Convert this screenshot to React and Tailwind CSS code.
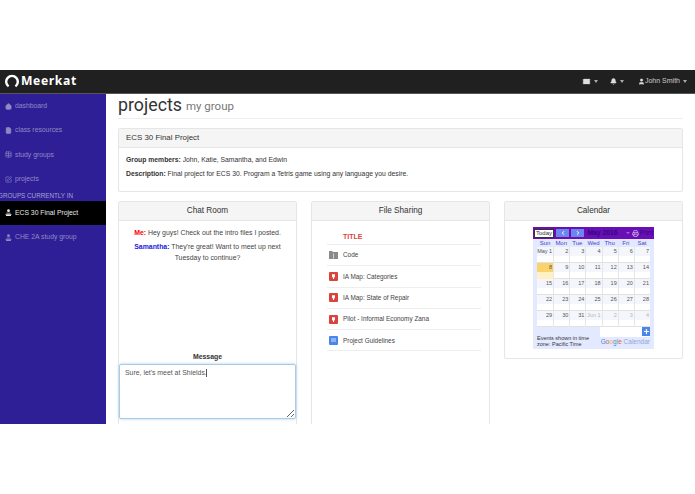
import { Mail, Bell, User, ChevronLeft, ChevronRight, Home, FileText, Table, SquarePen, Plus, Printer } from 'lucide-react';

const weeks = [
  ['May 1', '2', '3', '4', '5', '6', '7'],
  ['8', '9', '10', '11', '12', '13', '14'],
  ['15', '16', '17', '18', '19', '20', '21'],
  ['22', '23', '24', '25', '26', '27', '28'],
  ['29', '30', '31', 'Jun 1', '2', '3', '4'],
];
const days = ['Sun', 'Mon', 'Tue', 'Wed', 'Thu', 'Fri', 'Sat'];

function Caret() {
  return <span className="w-0 h-0 border-x-[2.5px] border-x-transparent border-t-[3px] border-t-[#aaa] ml-[3px]" />;
}

// little "people" icon used for the group rows
function GroupIcon({ color }) {
  return (
    <svg width="7" height="7" viewBox="0 0 10 10" fill={color} className="shrink-0">
      <circle cx="5" cy="2.4" r="2" />
      <path d="M2 5.2h6v1.3H2zM0.5 7h9v1H0.5zM1.5 8.3h7V10h-7z" />
    </svg>
  );
}

function SideItem({ icon, label, active }) {
  return (
    <div className={`h-[24.4px] flex items-center gap-[3px] pl-[5px] text-[6.8px] ${active ? 'bg-black text-[#e8e8e8]' : 'text-[#8f8ac4]'}`}>
      {icon}
      <span>{label}</span>
    </div>
  );
}

function Panel({ title, children, className }) {
  return (
    <div className={`border border-[#e6e6e6] rounded-[2px] bg-white ${className}`}>
      <div className="h-[19px] bg-[#f5f5f5] border-b border-[#e6e6e6] flex items-center justify-center text-[8.2px] text-[#333]">
        {title}
      </div>
      {children}
    </div>
  );
}

function FileIcon({ kind }) {
  if (kind === 'folder') {
    return (
      <svg width="9" height="8" viewBox="0 0 9 8" className="shrink-0">
        <path d="M0 0h3.5v1H9v7H0z" fill="#8a8a8a" />
        <path d="M4 2.5h1v5H4z" fill="#d5d5d5" />
      </svg>
    );
  }
  if (kind === 'map') {
    return (
      <svg width="9" height="9" viewBox="0 0 9 9" className="shrink-0">
        <rect width="9" height="9" rx="1" fill="#d9443f" />
        <path d="M3 2.2h3v2.4L5 6v1H4V6L3 4.6z" fill="#fff" />
      </svg>
    );
  }
  return (
    <svg width="9" height="9" viewBox="0 0 9 9" className="shrink-0">
      <rect width="9" height="9" rx="1" fill="#4a86e8" />
      <path d="M2 2.5h5v1H2zM2 4.5h5v1H2z" fill="#cfe0fb" />
    </svg>
  );
}

function FileRow({ kind, name }) {
  return (
    <div className="h-[21.3px] border-b border-[#eee] flex items-center pl-[2px]">
      <div className="w-[14px] flex">
        <FileIcon kind={kind} />
      </div>
      <span className="text-[6.4px] text-[#444]">{name}</span>
    </div>
  );
}

function Calendar() {
  return (
    <div className="w-[121px] mx-auto bg-[#e3e9ff] text-[#555]">
      <div className="h-[12px] bg-[#6a0fb5] flex items-center px-[1px] gap-[2px]">
        <span className="bg-white border border-[#333] text-[6px] leading-[7px] px-[1px] text-[#333]">Today</span>
        <span className="w-[14px] h-[8px] bg-[#6d86ee] flex items-center justify-center">
          <ChevronLeft size={6} color="white" strokeWidth={4} />
        </span>
        <span className="w-[14px] h-[8px] bg-[#6d86ee] flex items-center justify-center">
          <ChevronRight size={6} color="white" strokeWidth={4} />
        </span>
        <span className="ml-[1px] text-[6.8px] font-bold text-[#2c0a80] whitespace-nowrap">May 2016</span>
        <span className="ml-[6px] w-0 h-0 border-x-[2px] border-x-transparent border-t-[2px] border-t-[#9a6ad8]" />
        <span className="ml-auto flex items-center gap-[1px] text-[6.5px] text-[#2c0a80]">
          <Printer size={7} color="#e8e0ff" />
          Print
        </span>
      </div>
      <div className="px-[4px]">
        <div className="grid grid-cols-7 h-[8px] items-center text-center text-[6px] text-[#4a3fc9]">
          {days.map((d) => (
            <span key={d}>{d}</span>
          ))}
        </div>
        <div className="bg-white">
          {weeks.map((w, i) => (
            <div key={i} className="grid grid-cols-7 h-[16px] border-b border-[#e2e2e2]">
              {w.map((d, j) => {
                const other = i === 4 && j > 2;
                const today = d === '8';
                return (
                  <div key={d} className="border-l border-[#e6e6e6] first:border-l-0">
                    <div className={`h-[8.5px] flex items-center justify-end pr-[1px] text-[5.5px] ${today ? 'bg-[#fbd36c]' : 'bg-[#f4f6fb]'} ${other ? 'text-[#b5b5b5]' : ''}`}>
                      {d}
                    </div>
                    <div className={`h-[7px] ${today ? 'bg-[#fff1c4]' : ''}`} />
                  </div>
                );
              })}
            </div>
          ))}
        </div>
        <div className="h-[22px] flex justify-between items-end pb-[2px]">
          <span className="text-[5.5px] leading-[6px] text-[#333] w-[60px]">Events shown in time zone: Pacific Time</span>
          <div className="relative w-[50px] h-[20px] flex flex-col items-end">
            <div className="w-full h-[10px] bg-white" />
            <span className="text-[6.5px] text-[#8fa6d8] leading-[9px] whitespace-nowrap">
              <span className="text-[#4a86e8]">G</span>
              <span className="text-[#e0594f]">o</span>
              <span className="text-[#e8b93f]">o</span>
              <span className="text-[#4a86e8]">g</span>
              <span className="text-[#5aa85a]">l</span>
              <span className="text-[#e0594f]">e</span> Calendar
            </span>
            <span className="absolute top-0 right-0 w-[8px] h-[9px] bg-[#4a86e8] flex items-center justify-center">
              <Plus size={7} color="white" strokeWidth={4} />
            </span>
          </div>
        </div>
      </div>
    </div>
  );
}

export default function App() {
  return (
    <div className="w-[695px] h-[494px] bg-white pt-[70px] overflow-hidden font-['Liberation_Sans',Arial,sans-serif]">
      <div className="h-[354px] overflow-hidden flex flex-col">
        <nav className="h-[24px] shrink-0 bg-[#202020] border-b border-[#555] flex items-center justify-between pl-[5px] pr-[8px]">
          <div className="flex items-center gap-[2px] text-white">
            <svg width="14" height="14" viewBox="0 0 14 14" fill="none" stroke="white" strokeWidth="2.4">
              <path d="M3.6 12.4A5.8 5.8 0 1 1 10.4 12.4" />
            </svg>
            <span className="font-['Open_Sans',sans-serif] font-bold text-[12.2px] tracking-[0.6px]">Meerkat</span>
          </div>
          <div className="flex items-center text-[#ccc] text-[7px]">
            <Mail size={9} fill="#ddd" color="#202020" />
            <Caret />
            <Bell size={7} fill="#ddd" color="#ddd" className="ml-[12px]" />
            <Caret />
            <User size={7} fill="#ddd" color="#ddd" className="ml-[14px]" />
            <span>John Smith</span>
            <Caret />
          </div>
        </nav>
        <div className="flex flex-1 min-h-0">
          <aside className="w-[106px] shrink-0 bg-[#2e1f96] overflow-hidden">
            <SideItem icon={<Home size={7} fill="#8f8ac4" color="#8f8ac4" />} label="dashboard" />
            <SideItem icon={<FileText size={7} fill="#8f8ac4" color="#8f8ac4" />} label="class resources" />
            <SideItem icon={<Table size={7} color="#8f8ac4" />} label="study groups" />
            <SideItem icon={<SquarePen size={7} color="#8f8ac4" />} label="projects" />
            <div className="h-[9px] flex items-center -ml-[2px] text-[6.3px] leading-[8px] text-[#a5a1d2] whitespace-nowrap">GROUPS CURRENTLY IN</div>
            <SideItem icon={<GroupIcon color="#e8e8e8" />} label="ECS 30 Final Project" active />
            <SideItem icon={<GroupIcon color="#8f8ac4" />} label="CHE 2A study group" />
          </aside>
          <main className="flex-1 min-w-0 pl-[12px] pr-[12px] overflow-hidden">
            <div className="h-[25px] border-b border-[#eee] flex items-start gap-[4px]">
              <span className="text-[17.8px] leading-[22px] text-[#333] font-['Roboto',sans-serif]">projects</span>
              <span className="text-[11.5px] leading-[25px] text-[#777] font-['Roboto',sans-serif]">my group</span>
            </div>
            <div className="mt-[9px] border border-[#e6e6e6] rounded-[2px] h-[64px]">
              <div className="h-[19px] bg-[#f5f5f5] border-b border-[#e6e6e6] flex items-center pl-[7px] text-[7.9px] text-[#333]">
                ECS 30 Final Project
              </div>
              <div className="pl-[7px] pt-[7px] text-[6.8px] text-[#333]">
                <p className="leading-[9px]">
                  <b>Group members:</b> John, Katie, Samantha, and Edwin
                </p>
                <p className="leading-[9px] mt-[5px]">
                  <b>Description:</b> Final project for ECS 30. Program a Tetris game using any language you desire.
                </p>
              </div>
            </div>
            <div className="mt-[9px] flex gap-[14px] items-start">
              <Panel title="Chat Room" className="w-[179px] h-[240px] shrink-0">
                <div className="h-[198px] flex flex-col text-[6.9px] text-[#444] text-center">
                  <p className="mt-[7px] leading-[9px]">
                    <b className="text-[#f00]">Me:</b> Hey guys! Check out the intro files I posted.
                  </p>
                  <p className="mt-[4px] leading-[11px] px-[8px]">
                    <b className="text-[#1a1ae0]">Samantha:</b> They're great! Want to meet up next Tuesday to continue?
                  </p>
                  <b className="mt-auto text-[#333] leading-[9px] mb-[3px]">Message</b>
                  <div className="relative">
                    <textarea
                      readOnly
                      value="Sure, let's meet at Shields."
                      className="block w-[177px] h-[55px] border border-[#a8cbe6] rounded-[2px] shadow-[0_0_3px_#a8cbe6] px-[5px] py-[3px] text-[6.9px] text-[#555] outline-none"
                    />
                    <span className="absolute left-[87px] top-[5px] w-px h-[8px] bg-[#555]" />
                  </div>
                </div>
              </Panel>
              <Panel title="File Sharing" className="w-[179px] h-[240px] shrink-0">
                <div className="pl-[15px] pr-[8px] pt-[9px]">
                  <div className="h-[15px] border-b border-[#eee] pl-[16px] flex items-center text-[7px] font-bold text-[#d9443f]">TITLE</div>
                  <FileRow kind="folder" name="Code" />
                  <FileRow kind="map" name="IA Map: Categories" />
                  <FileRow kind="map" name="IA Map: State of Repair" />
                  <FileRow kind="map" name="Pilot - Informal Economy Zana" />
                  <FileRow kind="doc" name="Project Guidelines" />
                </div>
              </Panel>
              <Panel title="Calendar" className="w-[179px] h-[158px] shrink-0">
                <div className="pt-[6px]">
                  <Calendar />
                </div>
              </Panel>
            </div>
          </main>
        </div>
      </div>
    </div>
  );
}
